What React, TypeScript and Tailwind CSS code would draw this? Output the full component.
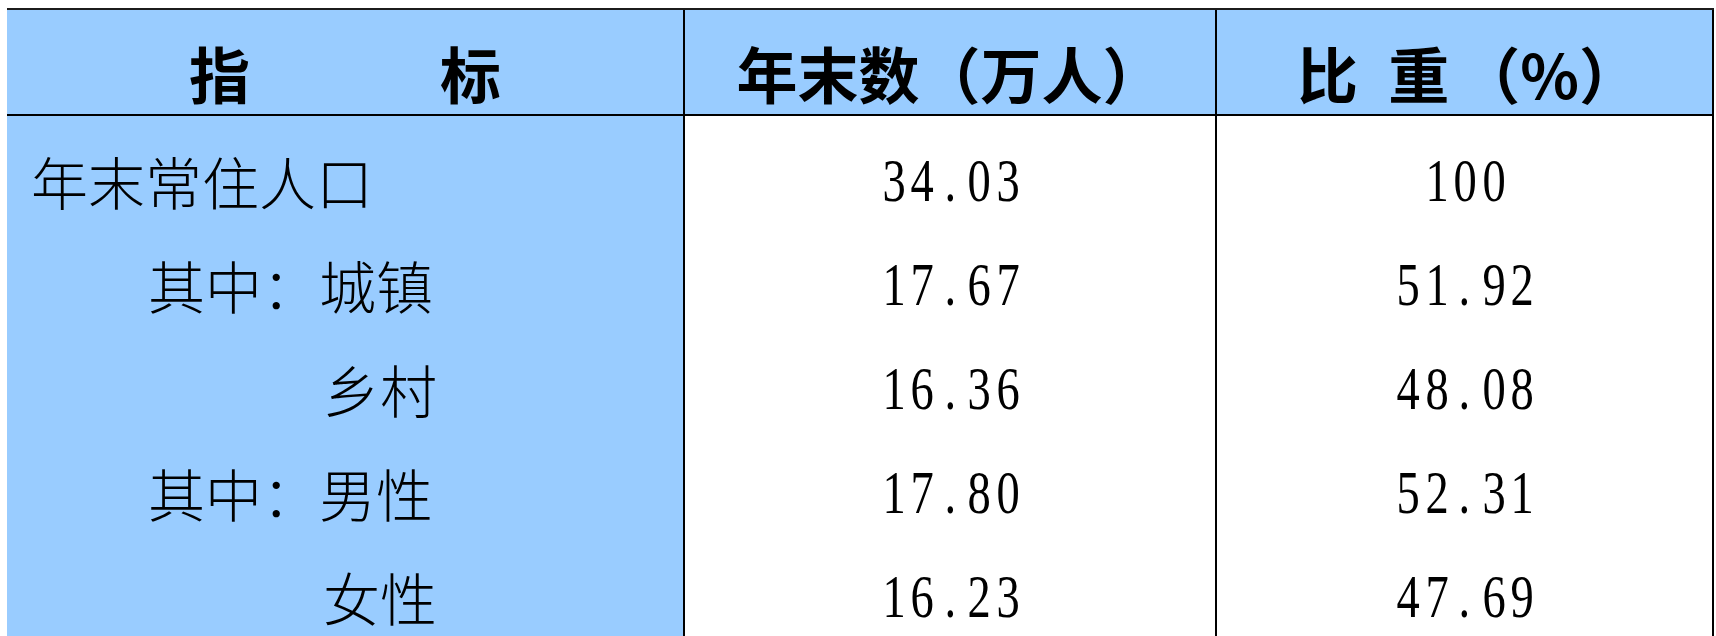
import React from "react"

interface Row {
  label: string
  indent: string
  count: string
  share: string
}

const rows: Row[] = [
  { label: "年末常住人口", indent: "pl-[24px]", count: "34.03", share: "100" },
  { label: "其中：城镇", indent: "pl-[141px]", count: "17.67", share: "51.92" },
  { label: "乡村", indent: "pl-[316px]", count: "16.36", share: "48.08" },
  { label: "其中：男性", indent: "pl-[141px]", count: "17.80", share: "52.31" },
  { label: "女性", indent: "pl-[316px]", count: "16.23", share: "47.69" },
]

const cjk = "font-['Noto_Sans_CJK_SC','Noto_Sans',sans-serif]"

// half-width digit cells, like the Song typeface in the original sheet
function Num({ value }: { value: string }) {
  return (
    <span className="flex font-['Liberation_Serif',serif] text-[62px] leading-none text-black">
      {value.split("").map((c, i) => (
        <span key={i} className="inline-block w-[28.5px] text-center scale-x-75">
          {c}
        </span>
      ))}
    </span>
  )
}

export default function App() {
  return (
    <div className="w-[1716px] h-[636px] overflow-hidden bg-white pt-2 pl-[7px]">
      <div className={`grid w-max grid-cols-[678px_532px_497px] border-t-2 border-[#1c1c1c] ${cjk}`}>
        {/* Header */}
        <div className="h-[106px] bg-[#99ccff] border-b-2 border-r-2 border-black flex items-center justify-center gap-[190px] pt-[21px] text-[61px] font-bold leading-none">
          <span>指</span>
          <span>标</span>
        </div>
        <div className="h-[106px] bg-[#99ccff] border-b-2 border-r-2 border-black flex items-center justify-center pt-[21px] text-[61px] font-bold leading-none">
          年末数（万人）
        </div>
        <div className="h-[106px] bg-[#99ccff] border-b-2 border-r-2 border-black flex items-center justify-center pt-[21px] pl-2 text-[61px] font-bold leading-none">
          <span>比</span>
          <span className="ml-[30px]">重</span>
          <span className="ml-[10px]">（%）</span>
        </div>

        {/* Body */}
        {rows.map((r) => (
          <React.Fragment key={r.label}>
            <div className={`h-[104px] bg-[#99ccff] border-r-2 border-black flex items-center pt-6 ${r.indent} text-[57px] font-light leading-none`}>
              {r.label}
            </div>
            <div className="h-[104px] bg-white border-r-2 border-black flex items-center justify-center pt-6">
              <Num value={r.count} />
            </div>
            <div className="h-[104px] bg-white border-r-2 border-black flex items-center justify-center pt-6">
              <Num value={r.share} />
            </div>
          </React.Fragment>
        ))}
      </div>
    </div>
  )
}
